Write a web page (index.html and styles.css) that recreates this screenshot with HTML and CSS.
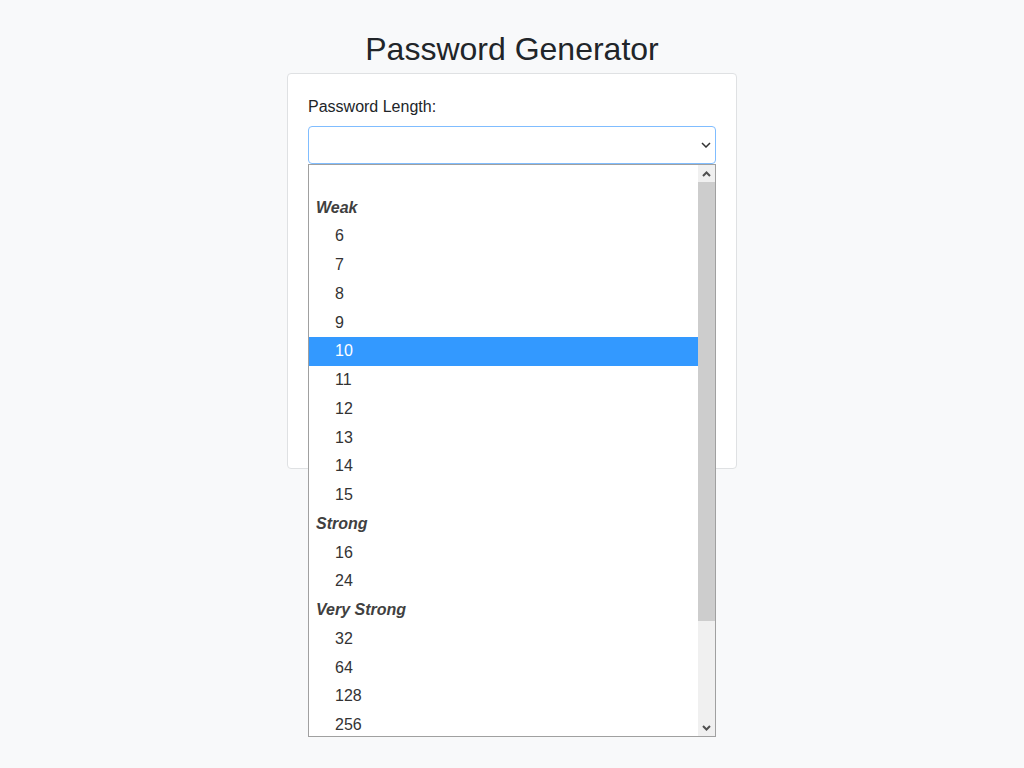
FILE: index.html
```html
<!DOCTYPE html>
<html lang="en">
<head>
    <meta charset="UTF-8">
    <meta name="viewport" content="width=device-width, initial-scale=1.0">
    <title>Password Generator</title>
    <link rel="stylesheet" href="styles.css">
</head>
<body>
<div class="page">
    <h1>Password Generator</h1>
    <div class="card">
        <label class="field-label">Password Length:</label>
        <div class="select-wrap">
            <div class="select-box">
                <svg class="chevron" width="10" height="6" viewBox="0 0 10 6"><path d="M1 1l4 4 4-4" fill="none" stroke="#333" stroke-width="1.5"/></svg>
            </div>
            <div class="dropdown">
                <div class="options">
                    <div class="row"></div>
                    <div class="row group">Weak</div>
                    <div class="row opt">6</div>
                    <div class="row opt">7</div>
                    <div class="row opt">8</div>
                    <div class="row opt">9</div>
                    <div class="row opt selected">10</div>
                    <div class="row opt">11</div>
                    <div class="row opt">12</div>
                    <div class="row opt">13</div>
                    <div class="row opt">14</div>
                    <div class="row opt">15</div>
                    <div class="row group">Strong</div>
                    <div class="row opt">16</div>
                    <div class="row opt">24</div>
                    <div class="row group">Very Strong</div>
                    <div class="row opt">32</div>
                    <div class="row opt">64</div>
                    <div class="row opt">128</div>
                    <div class="row opt">256</div>
                </div>
                <div class="scrollbar">
                    <div class="sb-btn">
                        <svg width="9" height="6" viewBox="0 0 9 6"><path d="M1 5l3.5-3.5L8 5" fill="none" stroke="#505050" stroke-width="2"/></svg>
                    </div>
                    <div class="sb-thumb"></div>
                    <div class="sb-track"></div>
                    <div class="sb-btn">
                        <svg width="9" height="6" viewBox="0 0 9 6"><path d="M1 1l3.5 3.5L8 1" fill="none" stroke="#505050" stroke-width="2"/></svg>
                    </div>
                </div>
            </div>
        </div>
    </div>
</div>
</body>
</html>
```

FILE: styles.css
```css
body {
    font-family: 'Liberation Sans', Arial, sans-serif;
    background-color: #f8f9fa;
    color: #212529;
    margin: 0;
}

.page {
    display: flex;
    flex-direction: column;
    align-items: center;
    box-sizing: border-box;
    min-height: 100vh;
    padding-top: 30px;
}

.page h1 {
    font-size: 32px;
    font-weight: normal;
    line-height: 1.2;
    margin: 0 0 5px;
}

.card {
    box-sizing: border-box;
    width: 450px;
    height: 396px;
    background: #fff;
    border: 1px solid #dfe1e3;
    border-radius: 4px;
    padding: 21px 20px 20px;
}

.field-label {
    display: block;
    font-size: 16px;
    line-height: 24px;
    margin-bottom: 7px;
}

.select-wrap {
    position: relative;
}

.select-box {
    box-sizing: border-box;
    height: 38px;
    border: 1px solid #80bdff;
    border-radius: 4px;
    display: flex;
    justify-content: flex-end;
    align-items: center;
    padding-right: 4px;
}

.dropdown {
    position: absolute;
    top: 100%;
    left: 0;
    right: 0;
    z-index: 10;
    box-sizing: border-box;
    height: 573px;
    border: 1px solid #a0a0a0;
    background: #fff;
    display: flex;
}

.options {
    flex: 1;
    height: 571px;
    overflow: hidden;
}

.row {
    height: 28.75px;
    line-height: 28.75px;
    font-size: 16px;
    color: #333;
}

.row:first-child {
    margin-top: -0.5px;
}

.group {
    font-weight: bold;
    font-style: italic;
    color: #404040;
    padding-left: 7px;
}

.opt {
    padding-left: 26px;
}

.selected {
    background: #3399ff;
    color: #fff;
}

.scrollbar {
    width: 17px;
    display: flex;
    flex-direction: column;
    background: #f0f0f0;
}

.sb-btn {
    height: 17px;
    display: flex;
    justify-content: center;
    align-items: center;
}

.sb-thumb {
    height: 439px;
    background: #cdcdcd;
}

.sb-track {
    flex: 1;
}
```
